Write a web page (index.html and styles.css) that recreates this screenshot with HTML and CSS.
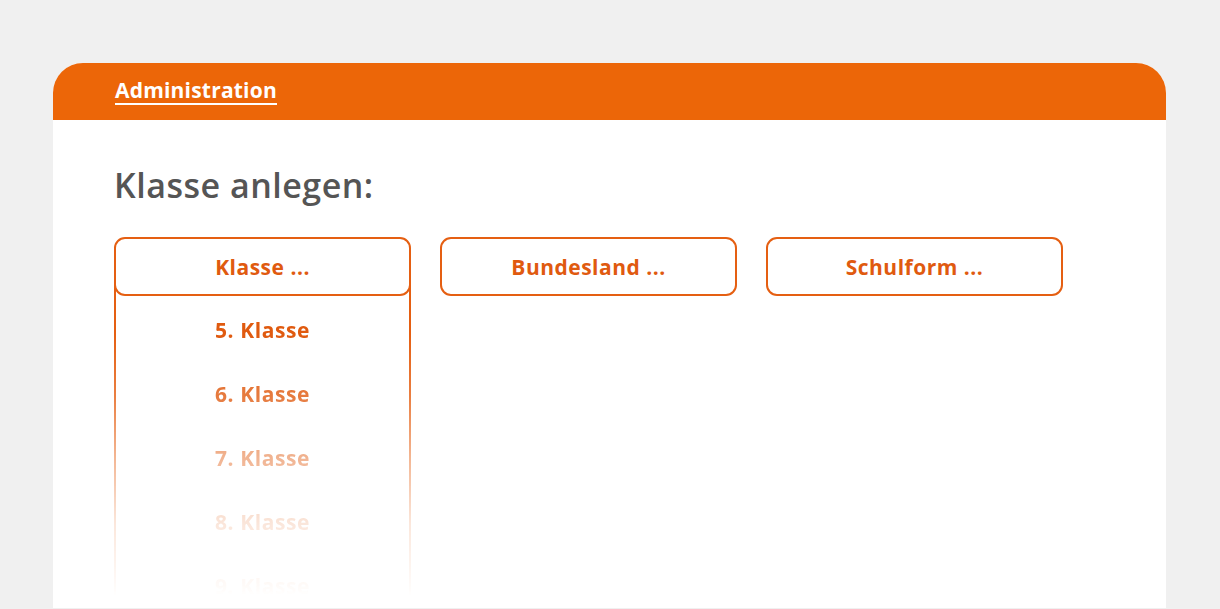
FILE: index.html
```html
<!DOCTYPE html>
<html lang="de">
<head>
<meta charset="utf-8">
<title>Administration</title>
<link rel="stylesheet" href="styles.css">
</head>
<body>
<main class="card">
  <header class="card-head">
    <a class="head-link" href="#">Administration</a>
  </header>
  <section class="card-body">
    <h1 class="title">Klasse anlegen:</h1>
    <div class="selects">
      <div class="select open">
        <div class="select-box">Klasse ...</div>
        <ul class="options">
          <li>5. Klasse</li>
          <li>6. Klasse</li>
          <li>7. Klasse</li>
          <li>8. Klasse</li>
          <li>9. Klasse</li>
        </ul>
      </div>
      <div class="select">
        <div class="select-box">Bundesland ...</div>
      </div>
      <div class="select">
        <div class="select-box">Schulform ...</div>
      </div>
    </div>
  </section>
</main>
</body>
</html>
```
FILE: styles.css
```css
html, body {
  margin: 0;
  padding: 0;
  height: 100%;
  overflow: hidden;
}
body {
  background: #f0f0f0;
  font-family: "Open Sans", "Noto Sans", sans-serif;
  padding: 63px 54px 0 53px;
  box-sizing: border-box;
}
.card {
  background: #ffffff;
  border-radius: 30px 30px 0 0;
  height: 545px;
  overflow: hidden;
}
.card-head {
  background: #ec6608;
  height: 57px;
  padding-left: 62px;
  display: flex;
  align-items: flex-start;
}
.head-link {
  color: #ffffff;
  font-weight: 700;
  font-size: 21px;
  line-height: 26px;
  margin-top: 14px;
  text-decoration: none;
  border-bottom: 2px solid #ffffff;
  letter-spacing: 0.2px;
}
.card-body {
  padding: 43px 0 0 61px;
}
.title {
  margin: 0;
  font-size: 34px;
  line-height: 44px;
  font-weight: 600;
  color: #555555;
  letter-spacing: 0.5px;
}
.selects {
  display: flex;
  gap: 29px;
  margin-top: 30px;
}
.select {
  width: 297px;
  position: relative;
}
.select-box {
  position: relative;
  z-index: 2;
  box-sizing: border-box;
  height: 59px;
  border: 2.5px solid #e55f12;
  border-radius: 11px;
  background: #ffffff;
  color: #e05a0f;
  font-weight: 700;
  font-size: 21px;
  letter-spacing: 0.5px;
  display: flex;
  align-items: center;
  justify-content: center;
}
.options {
  list-style: none;
  margin: -12px 0 0 0;
  padding: 14px 0 0 0;
  border-left: 2.5px solid #e55f12;
  border-right: 2.5px solid #e55f12;
  height: 312px;
  box-sizing: border-box;
  -webkit-mask-image: linear-gradient(to bottom, #000 0%, #000 16%, rgba(0,0,0,0.8) 36%, rgba(0,0,0,0.45) 56%, rgba(0,0,0,0.15) 77%, rgba(0,0,0,0.03) 96%, rgba(0,0,0,0) 100%);
  mask-image: linear-gradient(to bottom, #000 0%, #000 16%, rgba(0,0,0,0.8) 36%, rgba(0,0,0,0.45) 56%, rgba(0,0,0,0.15) 77%, rgba(0,0,0,0.03) 96%, rgba(0,0,0,0) 100%);
}
.options li {
  height: 64px;
  display: flex;
  align-items: center;
  justify-content: center;
  color: #e05a0f;
  font-weight: 700;
  font-size: 21px;
  letter-spacing: 0.6px;
}
```
